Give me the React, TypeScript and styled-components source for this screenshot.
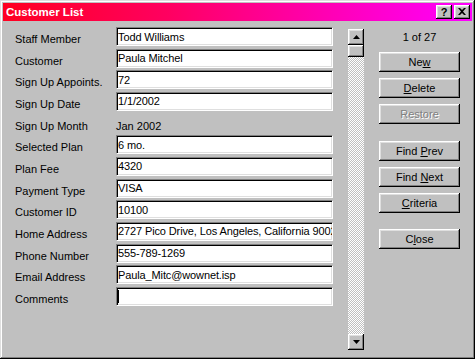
import styled, { createGlobalStyle } from "styled-components";

const GlobalStyle = createGlobalStyle`
  html, body {
    margin: 0;
    padding: 0;
    background: #c0c0c0;
  }
  body {
    font-family: "Liberation Sans", Arial, sans-serif;
    font-size: 11px;
    color: #000;
  }
`;

const raised = `
  background: #c0c0c0;
  box-shadow: inset -1px -1px #000, inset 1px 1px #fff,
    inset -2px -2px #808080, inset 2px 2px #dfdfdf;
`;

const fields: { label: string; value?: string; plain?: string; caret?: boolean }[] = [
  { label: "Staff Member", value: "Todd Williams" },
  { label: "Customer", value: "Paula Mitchel" },
  { label: "Sign Up Appoints.", value: "72" },
  { label: "Sign Up Date", value: "1/1/2002" },
  { label: "Sign Up Month", plain: "Jan 2002" },
  { label: "Selected Plan", value: "6 mo." },
  { label: "Plan Fee", value: "4320" },
  { label: "Payment Type", value: "VISA" },
  { label: "Customer ID", value: "10100" },
  { label: "Home Address", value: "2727 Pico Drive, Los Angeles, California 9002" },
  { label: "Phone Number", value: "555-789-1269" },
  { label: "Email Address", value: "Paula_Mitc@wownet.isp" },
  { label: "Comments", value: "", caret: true },
];

const App = () => {
  return (
    <>
      <GlobalStyle />
      <Window>
        <TitleBar>
          <TitleText>Customer List</TitleText>
          <TitleButtons>
            <TitleButton>?</TitleButton>
            <TitleButton>
              <svg width="8" height="7" viewBox="0 0 8 7">
                <path d="M0 0h2l2 2 2-2h2L5 3.5 8 7H6L4 5 2 7H0l3-3.5z" fill="#000" />
              </svg>
            </TitleButton>
          </TitleButtons>
        </TitleBar>
        <Body>
          <Form>
            {fields.map((f) => (
              <Row key={f.label}>
                <Label>{f.label}</Label>
                {f.plain ? (
                  <PlainValue>{f.plain}</PlainValue>
                ) : (
                  <Field>
                    {f.value}
                    {f.caret && <Caret />}
                  </Field>
                )}
              </Row>
            ))}
          </Form>
          <ScrollBar>
            <ScrollArrow>
              <svg width="7" height="4" viewBox="0 0 7 4">
                <path d="M3.5 0L7 4H0z" fill="#000" />
              </svg>
            </ScrollArrow>
            <Thumb />
            <Track />
            <ScrollArrow>
              <svg width="7" height="4" viewBox="0 0 7 4">
                <path d="M0 0h7L3.5 4z" fill="#000" />
              </svg>
            </ScrollArrow>
          </ScrollBar>
          <Side>
            <Counter>1 of 27</Counter>
            <ButtonGroup>
              <Button>
                Ne<u>w</u>
              </Button>
              <Button>
                <u>D</u>elete
              </Button>
              <Button $disabled>Restore</Button>
            </ButtonGroup>
            <ButtonGroup $top={17}>
              <Button>
                Find <u>P</u>rev
              </Button>
              <Button>
                Find <u>N</u>ext
              </Button>
              <Button>
                <u>C</u>riteria
              </Button>
            </ButtonGroup>
            <ButtonGroup $top={16}>
              <Button>
                C<u>l</u>ose
              </Button>
            </ButtonGroup>
          </Side>
        </Body>
      </Window>
    </>
  );
};

export default App;

const Window = styled.div`
  width: 475px;
  height: 359px;
  box-sizing: border-box;
  padding: 3px;
  background: #c0c0c0;
  box-shadow: inset -1px -1px #000, inset 1px 1px #dfdfdf,
    inset -2px -2px #808080, inset 2px 2px #fff;
  display: flex;
  flex-direction: column;
`;

const TitleBar = styled.div`
  height: 18px;
  background: linear-gradient(to right, #ff0020, #ff0060 35%, #ff00ff);
  display: flex;
  align-items: center;
  justify-content: space-between;
  padding: 0 2px 0 3px;
`;

const TitleText = styled.span`
  color: #fff;
  font-weight: bold;
  font-size: 11.5px;
`;

const TitleButtons = styled.div`
  display: flex;
  gap: 2px;
`;

const TitleButton = styled.div`
  ${raised}
  width: 16px;
  height: 14px;
  box-sizing: border-box;
  display: flex;
  align-items: center;
  justify-content: center;
  font-weight: bold;
  font-size: 11px;
  padding-bottom: 1px;
`;

const Body = styled.div`
  display: flex;
  padding: 6px 0 0 12px;
`;

const Form = styled.div`
  display: flex;
  flex-direction: column;
  gap: 2.67px;
`;

const Row = styled.div`
  display: grid;
  grid-template-columns: 101px 217px;
  height: 19px;
`;

const Label = styled.div`
  align-self: end;
  line-height: 14px;
  white-space: nowrap;
`;

const PlainValue = styled(Label)``;

const Field = styled.div`
  box-sizing: border-box;
  height: 19px;
  border: 1px solid;
  border-color: #808080 #fff #fff #808080;
  box-shadow: inset 1px 1px #000, inset -1px -1px #dfdfdf;
  background: #fff;
  padding: 0 1px 0 1px;
  display: flex;
  align-items: center;
  white-space: nowrap;
  overflow: hidden;
  letter-spacing: -0.12px;
`;

const Caret = styled.span`
  display: inline-block;
  width: 1px;
  height: 13px;
  background: #000;
`;

const ScrollBar = styled.div`
  margin: 2px 0 0 15px;
  width: 16px;
  height: 321px;
  display: flex;
  flex-direction: column;
`;

const ScrollArrow = styled.div`
  ${raised}
  height: 16px;
  display: flex;
  align-items: center;
  justify-content: center;
`;

const Thumb = styled.div`
  ${raised}
  height: 12px;
`;

const Track = styled.div`
  flex: 1;
  background: repeating-conic-gradient(#fff 0 25%, #c0c0c0 0 50%) 0 0 / 2px 2px;
`;

const Side = styled.div`
  margin-left: 15px;
  width: 81px;
  display: flex;
  flex-direction: column;
`;

const Counter = styled.div`
  height: 20px;
  line-height: 20px;
  text-align: center;
  margin-bottom: 5px;
`;

const ButtonGroup = styled.div<{ $top?: number }>`
  display: flex;
  flex-direction: column;
  gap: 6px;
  margin-top: ${(p) => p.$top ?? 0}px;
`;

const Button = styled.div<{ $disabled?: boolean }>`
  ${raised}
  height: 20px;
  line-height: 20px;
  text-align: center;
  color: ${(p) => (p.$disabled ? "#808080" : "#000")};
  text-shadow: ${(p) => (p.$disabled ? "1px 1px #fff" : "none")};
`;
